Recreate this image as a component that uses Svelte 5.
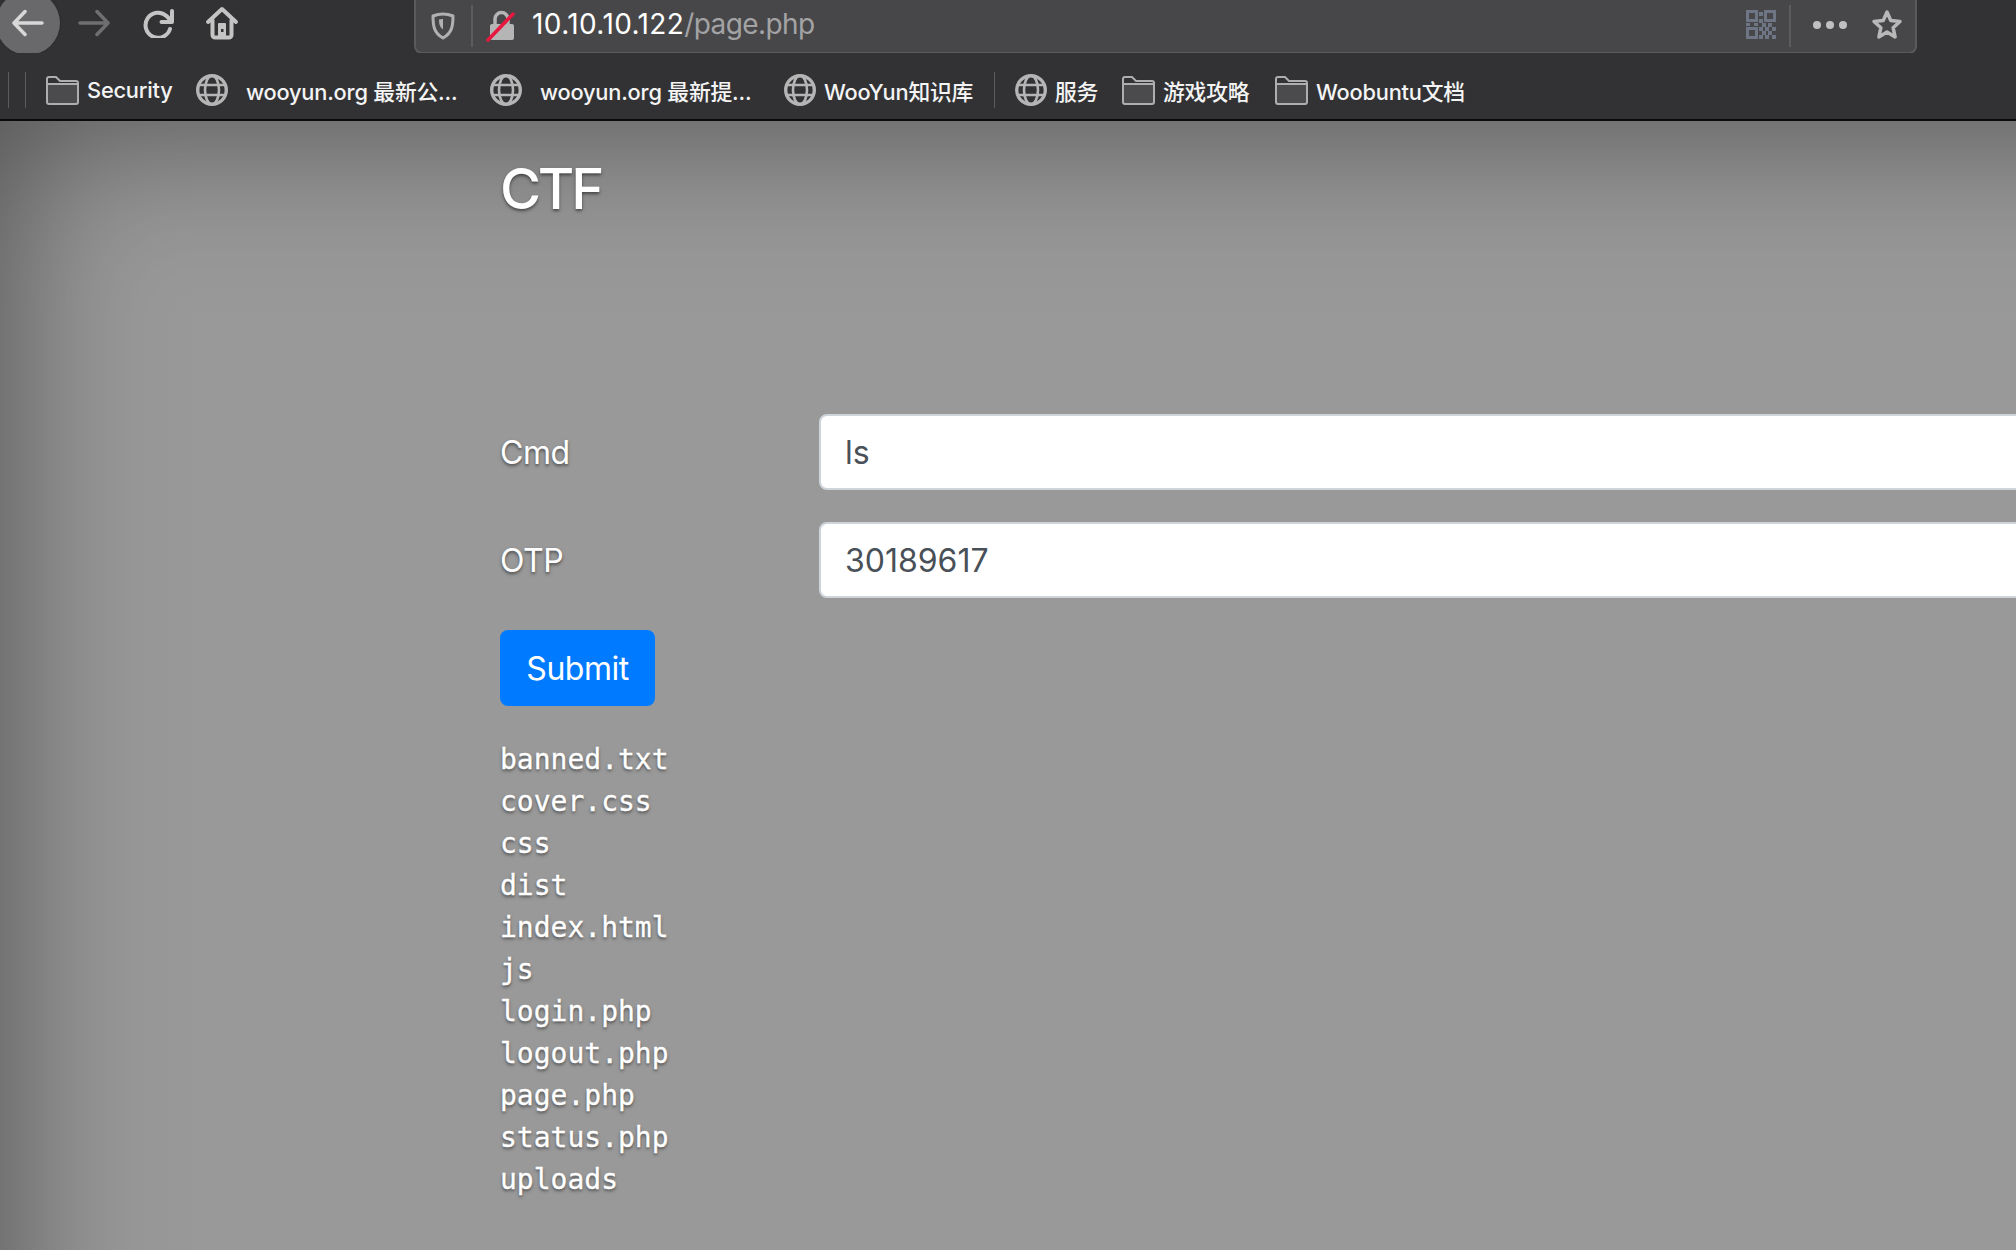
<script lang="ts">
  const bookmarks = [
    { icon: 'folder', label: 'Security', width: 150, wide: false },
    { icon: 'globe', label: 'wooyun.org 最新公...', width: 294, wide: true },
    { icon: 'globe', label: 'wooyun.org 最新提...', width: 294, wide: true },
    { icon: 'globe', label: 'WooYun知识库', width: 210, wide: false },
    { icon: 'sep', label: '', width: 0, wide: false },
    { icon: 'globe', label: '服务', width: 107, wide: false },
    { icon: 'folder', label: '游戏攻略', width: 153, wide: false },
    { icon: 'folder', label: 'Woobuntu文档', width: 190, wide: false }
  ];
  const files = ['banned.txt', 'cover.css', 'css', 'dist', 'index.html', 'js', 'login.php', 'logout.php', 'page.php', 'status.php', 'uploads'];
</script>

<div class="browser">
  <header class="toolbar">
    <div class="back">
      <svg width="32" height="28" viewBox="0 0 32 28" fill="none" stroke="#d8d8d8" stroke-width="3.500" stroke-linecap="round" stroke-linejoin="round"><path d="M2 14h28M13 2.500 2 14l11 11.500"/></svg>
    </div>
    <button class="nav forward" aria-label="Forward">
      <svg width="32" height="28" viewBox="0 0 32 28" fill="none" stroke="#6f6f71" stroke-width="3.500" stroke-linecap="round" stroke-linejoin="round"><path d="M2 14h28M19 2.500 30 14 19 25.500"/></svg>
    </button>
    <button class="nav reload" aria-label="Reload">
      <svg width="32" height="30" viewBox="0 0 32 30" fill="none" stroke="#c4c4c4" stroke-width="4" stroke-linecap="round" stroke-linejoin="round"><path d="M28 21A12.500 12.500 0 1 1 24.500 8L30 13.500M30 3V14H19.500"/></svg>
    </button>
    <button class="nav home" aria-label="Home">
      <svg width="34" height="34" viewBox="0 0 34 34"><path fill="none" stroke="#c4c4c4" stroke-width="4" stroke-linejoin="round" stroke-linecap="round" d="M3 16 17 3l14 13M7.500 14v15a2.500 2.500 0 0 0 2.500 2.500h14a2.500 2.500 0 0 0 2.500-2.500V14"/><path fill="#c4c4c4" d="M13 18a1 1 0 0 1 1-1h6a1 1 0 0 1 1 1v14h-8z"/><rect x="16" y="23" width="2.500" height="3" fill="#323234"/></svg>
    </button>

    <div class="urlbar">
      <svg class="shield" width="24" height="28" viewBox="0 0 24 28"><path d="M12 2c3 0 7 .8 10 2 0 10-1 17-10 22C3 21 2 14 2 4c3-1.200 7-2 10-2z" fill="none" stroke="#b0b0b1" stroke-width="3" stroke-linejoin="round"/><path d="M12 7c-1.500 0-3 .3-4 .6 0 4.500.7 7.500 4 10z" fill="#b0b0b1"/></svg>
      <span class="bar-sep"></span>
      <svg class="lock" width="30" height="32" viewBox="0 0 30 32"><path d="M9 14V9a6.500 6.500 0 0 1 13 0v5" fill="none" stroke="#b5b5b6" stroke-width="3.500"/><rect x="4" y="14" width="24" height="16" rx="2" fill="#b5b5b6"/><path d="M2 30 27 4" stroke="#e8173f" stroke-width="3.500" stroke-linecap="round"/></svg>
      <span class="url"><span class="host">10.10.10.122</span><span class="path">/page.php</span></span>
      <svg class="qr" width="30" height="29" viewBox="0 0 30 29" fill="#6e7685">
        <path fill-rule="evenodd" d="M0 0h12v12H0zM3 3v6h6V3zM18 0h12v12H18zM21 3v6h6V3zM0 17h12v12H0zM3 20v6h6v-6z"/>
        <path d="M13 2h4v4h-4zM13 9h4v4h-4zM16 13h4v4h-4zM22 13h4v4h-4zM13 17h4v4h-4zM19 17h4v4h-4zM26 17h4v4h-4zM16 21h4v4h-4zM22 21h4v4h-4zM13 25h4v4h-4zM19 25h4v4h-4zM26 25h4v4h-4zM0 13h4v3H0zM8 13h4v3H8z"/>
      </svg>
      <span class="bar-sep right"></span>
      <span class="dots"><i></i><i></i><i></i></span>
      <svg class="star" width="32" height="32" viewBox="0 0 32 32"><path d="M16 3l3.800 8.600 9.200.9-6.900 6.200 2 9.200-8.100-4.800-8.100 4.800 2-9.200L3 12.500l9.200-.9z" fill="none" stroke="#b8b8b9" stroke-width="3.500" stroke-linejoin="round"/></svg>
    </div>
  </header>

  <nav class="bookmarks">
    <span class="bm-rule"></span>
    <span class="bm-rule second"></span>
    {#each bookmarks as b}
      {#if b.icon === 'sep'}
        <span class="bm-rule mid"></span>
      {:else}
        <span class="bm" style="width: {b.width}px">
          {#if b.icon === 'folder'}
            <svg class="bm-folder" width="33" height="29" viewBox="0 0 33 29"><path d="M1 8h31v18a2 2 0 0 1-2 2H3a2 2 0 0 1-2-2z" fill="#4b4b4d"/><path d="M1 3a2 2 0 0 1 2-2h7l4 4h16a2 2 0 0 1 2 2v19a2 2 0 0 1-2 2H3a2 2 0 0 1-2-2zM1 8h31" fill="none" stroke="#aeaeaf" stroke-width="2"/></svg>
          {:else}
            <svg class="bm-globe" class:wide={b.wide} width="32" height="32" viewBox="0 0 32 32" fill="none" stroke="#b5b5b6"><circle cx="16" cy="16" r="14.300" stroke-width="3.400"/><ellipse cx="16" cy="16" rx="7" ry="14.300" stroke-width="2.600"/><path d="M2.500 11h27M2.500 21h27" stroke-width="2.600"/></svg>
          {/if}
          <span class="bm-label">{b.label}</span>
        </span>
      {/if}
    {/each}
  </nav>

  <div class="viewport">
    <main class="page">
      <h3>CTF</h3>
      <form>
        <div class="row">
          <label for="cmd">Cmd</label>
          <input id="cmd" value="ls" />
        </div>
        <div class="row">
          <label for="otp">OTP</label>
          <input id="otp" value="30189617" />
        </div>
        <button type="button" class="submit">Submit</button>
      </form>
      <pre>{files.join('\n')}</pre>
    </main>
  </div>
</div>

<style>
  :global(body) { margin: 0; background: #999; overflow: hidden; }
  .browser { width: 2016px; height: 1250px; overflow: hidden; font-family: Inter, "Noto Sans CJK SC", sans-serif; display: flex; flex-direction: column; }

  .toolbar { height: 53px; flex: none; background: #323234; display: flex; align-items: flex-start; position: relative; z-index: 1; }
  .back { width: 64px; height: 64px; margin: -9px 0 0 -4px; border-radius: 50%; background: #69696b; display: flex; align-items: center; justify-content: center; flex: none; box-shadow: 0 0 2px #222; }
  .nav { background: none; border: 0; padding: 0; display: flex; flex: none; }
  .forward { margin: 9px 0 0 18px; }
  .reload { margin: 8px 0 0 32px; }
  .home { margin: 6px 0 0 31px; }

  .urlbar { margin-left: 175px; width: 1499px; height: 52px; background: #474749; border: 2px solid #5a5a5c; border-top: 0; border-radius: 0 0 8px 8px; display: flex; align-items: center; box-sizing: content-box; flex: none; }
  .shield { margin-left: 15px; flex: none; }
  .bar-sep { width: 2px; height: 42px; background: #5c5c60; margin-left: 16px; flex: none; }
  .lock { margin-left: 13px; flex: none; }
  .url { margin-left: 16px; font-size: 28px; margin-bottom: 5px; }
  .host { color: #fff; letter-spacing: .4px; }
  .path { color: #a3a3a5; letter-spacing: -.6px; }
  .qr { margin: 0 0 4px auto; flex: none; }
  .bar-sep.right { margin-left: 13px; }
  .dots { display: flex; gap: 5px; margin: 0 0 3px 22px; }
  .dots i { width: 8px; height: 8px; border-radius: 50%; background: #c0c0c1; display: block; }
  .star { margin: 0 12px 3px 24px; flex: none; }

  .bookmarks { height: 66px; box-sizing: content-box; flex: none; background: #323234; border-bottom: 2px solid #0b0b0c; display: flex; align-items: center; padding-left: 8px; position: relative; z-index: 1; }
  .bm-rule { width: 1px; height: 36px; background: #5c5c5e; flex: none; margin-top: 8px; }
  .bm-rule.second { margin-left: 16px; margin-right: 20px; }
  .bm-rule.mid { margin: 8px 20px 0 0; }
  .bm { display: flex; align-items: center; flex: none; color: #f4f4f4; font-size: 21.800px; font-weight: 500; letter-spacing: -.2px; white-space: nowrap; padding-top: 8px; }
  .bm-folder { margin-right: 8px; flex: none; }
  .bm-globe { margin-right: 8px; flex: none; }
  .bm-globe.wide { margin-right: 18px; }
  .bm-label { display: block; }

  .viewport { flex: 1; overflow: hidden; background: #999; }
  .page { width: 3200px; height: 2400px; box-sizing: border-box; padding: 0 0 0 500px; background: #999; box-shadow: inset 0 0 160px rgba(0, 0, 0, .5); color: #fff; text-shadow: 0 1.600px 3.200px rgba(0, 0, 0, .5); }
  h3 { margin: 0; padding-top: 35px; font-size: 56px; line-height: 67px; font-weight: 500; letter-spacing: -3.200px; }
  form { margin-top: 191px; }
  .row { display: flex; align-items: center; margin-bottom: 32px; }
  label { width: 319px; font-size: 32px; letter-spacing: -.5px; flex: none; }
  input { width: 1800px; height: 76px; box-sizing: border-box; border: 2px solid #ced4da; border-radius: 8px; padding: 0 24px; font: 32px Inter, sans-serif; letter-spacing: 0; color: #495057; background: #fff; outline: none; }
  .submit { display: block; width: 155px; height: 76px; padding: 0; border: 0; border-radius: 8px; background: #007bff; color: #fff; font: 32px Inter, sans-serif; letter-spacing: -.5px; }
  pre { margin: 33px 0 0; font-family: "DejaVu Sans Mono", monospace; font-size: 28px; line-height: 42px; -webkit-text-stroke: .3px #fff; }
</style>
